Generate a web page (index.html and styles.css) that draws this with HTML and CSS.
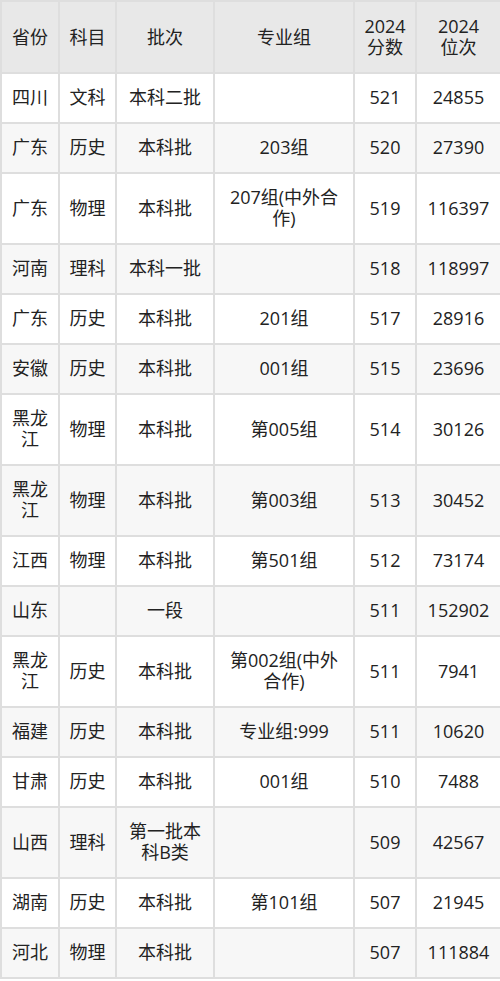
FILE: index.html
```html
<!DOCTYPE html>
<html lang="zh-CN">
<head>
<meta charset="utf-8">
<title>2024 分数位次</title>
<link rel="stylesheet" href="styles.css">
</head>
<body>
<table class="score-table">
  <colgroup>
    <col class="c-prov"><col class="c-subj"><col class="c-batch"><col class="c-group"><col class="c-score"><col class="c-rank">
  </colgroup>
  <thead>
    <tr><th>省份</th><th>科目</th><th>批次</th><th>专业组</th><th>2024<br>分数</th><th>2024<br>位次</th></tr>
  </thead>
  <tbody>
    <tr><td>四川</td><td>文科</td><td>本科二批</td><td></td><td>521</td><td>24855</td></tr>
    <tr><td>广东</td><td>历史</td><td>本科批</td><td>203组</td><td>520</td><td>27390</td></tr>
    <tr><td>广东</td><td>物理</td><td>本科批</td><td>207组(中外合作)</td><td>519</td><td>116397</td></tr>
    <tr><td>河南</td><td>理科</td><td>本科一批</td><td></td><td>518</td><td>118997</td></tr>
    <tr><td>广东</td><td>历史</td><td>本科批</td><td>201组</td><td>517</td><td>28916</td></tr>
    <tr><td>安徽</td><td>历史</td><td>本科批</td><td>001组</td><td>515</td><td>23696</td></tr>
    <tr><td>黑龙江</td><td>物理</td><td>本科批</td><td>第005组</td><td>514</td><td>30126</td></tr>
    <tr><td>黑龙江</td><td>物理</td><td>本科批</td><td>第003组</td><td>513</td><td>30452</td></tr>
    <tr><td>江西</td><td>物理</td><td>本科批</td><td>第501组</td><td>512</td><td>73174</td></tr>
    <tr><td>山东</td><td></td><td>一段</td><td></td><td>511</td><td>152902</td></tr>
    <tr><td>黑龙江</td><td>历史</td><td>本科批</td><td>第002组(中外合作)</td><td>511</td><td>7941</td></tr>
    <tr><td>福建</td><td>历史</td><td>本科批</td><td>专业组:999</td><td>511</td><td>10620</td></tr>
    <tr><td>甘肃</td><td>历史</td><td>本科批</td><td>001组</td><td>510</td><td>7488</td></tr>
    <tr><td>山西</td><td>理科</td><td>第一批本科B类</td><td></td><td>509</td><td>42567</td></tr>
    <tr><td>湖南</td><td>历史</td><td>本科批</td><td>第101组</td><td>507</td><td>21945</td></tr>
    <tr><td>河北</td><td>物理</td><td>本科批</td><td></td><td>507</td><td>111884</td></tr>
  </tbody>
</table>
</body>
</html>
```
FILE: styles.css
```css
html, body {
  margin: 0;
  padding: 0;
  background: #ffffff;
}

.score-table {
  width: 500px;
  table-layout: fixed;
  border-collapse: collapse;
  font-family: "Open Sans", "Noto Sans CJK SC", sans-serif;
  font-size: 18px;
  line-height: 21px;
  color: #222222;
}

.c-prov { width: 58px; }
.c-subj { width: 57px; }
.c-batch { width: 98px; }
.c-group { width: 140px; }
.c-score { width: 62px; }
.c-rank { width: 85px; }

.score-table th,
.score-table td {
  border: 2px solid #dedede;
  padding: 13px 9px 14px;
  text-align: center;
  vertical-align: middle;
  font-weight: normal;
}

.score-table th {
  background: #e8e8e8;
  padding-top: 14px;
  padding-bottom: 14px;
}

.score-table tbody tr:nth-child(even) td {
  background: #f7f7f7;
}
```
